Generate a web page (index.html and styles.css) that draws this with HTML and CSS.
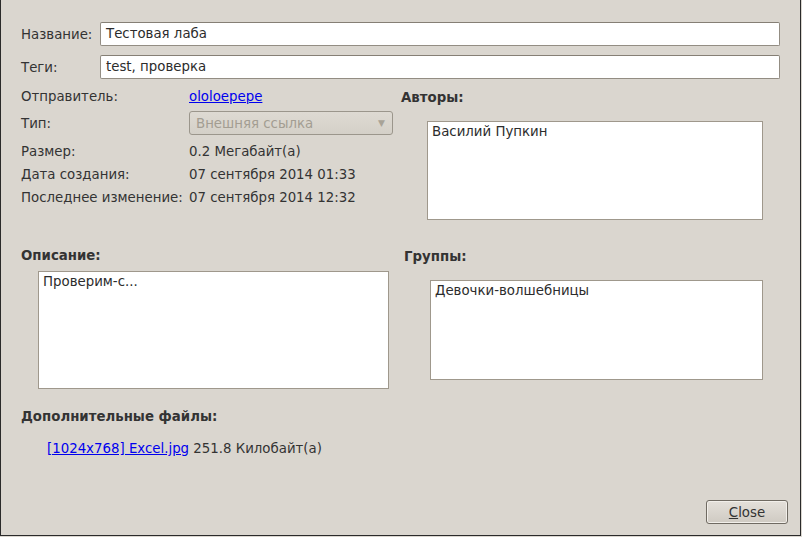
FILE: index.html
```html
<!DOCTYPE html>
<html lang="ru">
<head>
<meta charset="utf-8">
<title>Лаба</title>
<link rel="stylesheet" href="styles.css">
</head>
<body>
<div class="window">
  <div class="field-row">
    <span class="label">Название:</span>
    <div class="entry">Тестовая лаба</div>
  </div>
  <div class="field-row second">
    <span class="label">Теги:</span>
    <div class="entry">test, проверка</div>
  </div>

  <div class="section top">
    <div class="col left info">
      <div class="info-row"><span class="label">Отправитель:</span><a class="link" href="#">ololoepepe</a></div>
      <div class="info-row combo-row"><span class="label">Тип:</span>
        <div class="combo"><span>Внешняя ссылка</span><span class="arrow">▼</span></div>
      </div>
      <div class="info-row after-combo"><span class="label">Размер:</span><span>0.2 Мегабайт(а)</span></div>
      <div class="info-row"><span class="label">Дата создания:</span><span>07 сентября 2014 01:33</span></div>
      <div class="info-row"><span class="label">Последнее изменение:</span><span>07 сентября 2014 12:32</span></div>
    </div>
    <div class="col right authors">
      <div class="heading">Авторы:</div>
      <div class="listbox authors-box">Василий Пупкин</div>
    </div>
  </div>

  <div class="section mid">
    <div class="col left desc">
      <div class="heading">Описание:</div>
      <div class="listbox desc-box">Проверим-с...</div>
    </div>
    <div class="col right groups">
      <div class="heading">Группы:</div>
      <div class="listbox groups-box">Девочки-волшебницы</div>
    </div>
  </div>

  <div class="files">
    <div class="heading">Дополнительные файлы:</div>
    <div class="file"><a class="link" href="#">[1024x768] Excel.jpg</a> 251.8 Килобайт(а)</div>
  </div>

  <div class="actions">
    <button class="btn"><span class="mnemonic">C</span>lose</button>
  </div>
</div>
</body>
</html>
```

FILE: styles.css
```css
* { box-sizing: border-box; }

html, body {
  margin: 0;
  padding: 0;
  width: 802px;
  height: 537px;
  background: #dad6cf;
  overflow: hidden;
}

body {
  font-family: "DejaVu Sans", "Liberation Sans", sans-serif;
  font-size: 13.33px;
  color: #333333;
}

.window {
  width: 801px;
  height: 536px;
  border-left: 1px solid #2a2a2a;
  border-right: 1px solid #2a2a2a;
  border-bottom: 1px solid #2a2a2a;
  padding: 22px 20px 11px 20px;
  display: flex;
  flex-direction: column;
}

.field-row {
  display: grid;
  grid-template-columns: 79px 1fr;
  align-items: center;
}
.field-row.second { margin-top: 9px; }

.entry {
  height: 24px;
  background: #ffffff;
  border: 1px solid #938d83;
  border-top-color: #857f75;
  border-radius: 2px;
  padding: 0 5px;
  line-height: 22px;
  color: #2c2c2c;
}

.section {
  display: flex;
}
.col.left { width: 372px; flex: none; }
.col.right { flex: 1; }

.top { padding-top: 7px; }
.top .col.right { margin-left: 8px; }

.info {
  display: flex;
  flex-direction: column;
  gap: 3px;
}
.info-row {
  display: grid;
  grid-template-columns: 168px 1fr;
  align-items: center;
  height: 20px;
}
.info-row.combo-row { height: 24px; margin-top: 2px; }
.info-row.after-combo { margin-top: 3px; }

.link {
  color: #0000ee;
  text-decoration: underline;
}

.combo {
  height: 24px;
  border: 1px solid #9b968c;
  border-radius: 3px;
  background: linear-gradient(#dedad3, #d4d0c8);
  color: #a39d92;
  display: flex;
  align-items: center;
  justify-content: space-between;
  padding: 0 7px 0 6px;
}
.combo .arrow {
  font-size: 9px;
  color: #a8a397;
}

.heading {
  font-weight: bold;
  height: 20px;
  line-height: 20px;
}

.listbox {
  background: #ffffff;
  border: 1px solid #9f988c;
  padding: 1px 4px;
  line-height: 18px;
  color: #2c2c2c;
}

.authors { padding-top: 2px; }
.authors-box {
  margin: 13px 0 0 26px;
  width: 336px;
  height: 99px;
}

.mid { margin-top: 26px; }
.mid .col.right { margin-left: 11px; padding-top: 1px; }
.desc-box {
  margin: 5px 0 0 17px;
  width: 351px;
  height: 118px;
}
.groups-box {
  margin: 13px 0 0 26px;
  width: 333px;
  height: 100px;
}

.files { margin-top: 18px; }
.file {
  margin: 12px 0 0 26px;
  height: 20px;
  line-height: 20px;
}

.actions {
  margin-top: auto;
  margin-right: -8px;
  display: flex;
  justify-content: flex-end;
}
.btn {
  width: 82px;
  height: 24px;
  font-family: inherit;
  font-size: 13.33px;
  color: #333333;
  background: linear-gradient(#e4e0da, #cfcac2);
  border: 1px solid #6f6a62;
  border-radius: 3px;
  box-shadow: inset 0 0 0 1px #f2efea;
  padding: 0;
}
.mnemonic { text-decoration: underline; }
```
